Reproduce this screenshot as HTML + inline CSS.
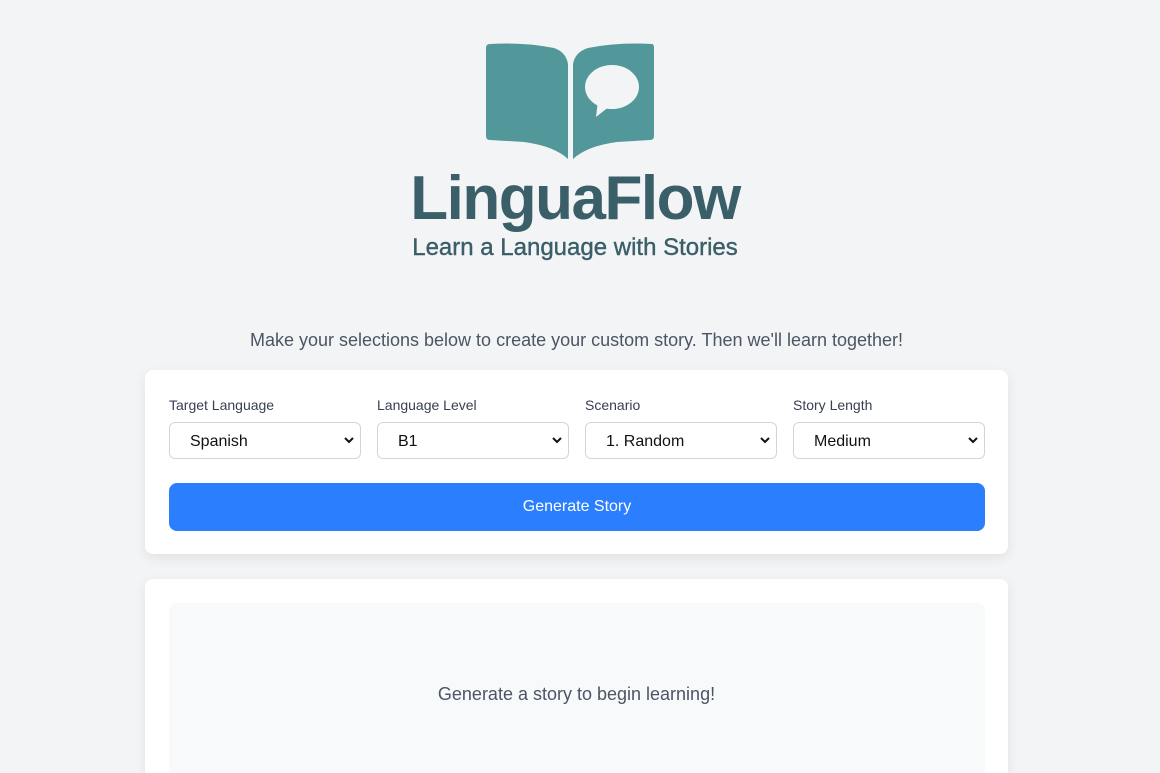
<!DOCTYPE html>
<html><head><style>
html,body{margin:0;height:773px;overflow:hidden}
body{background:#f3f4f6;font-family:"Liberation Sans",sans-serif;width:1160px;position:relative}
.abs{position:absolute}
.card{position:absolute;left:145px;width:863px;background:#fff;border-radius:8px;box-shadow:0 4px 12px rgba(0,0,0,.08)}
.lbl{position:absolute;top:27px;font-size:14px;color:#374151}
.sel{position:absolute;top:52px;width:190px;height:35px;border:1px solid #d1d5db;border-radius:6px;font-size:16px;color:#111;box-sizing:content-box}
.sel span{position:absolute;left:20px;top:10px}
.sel svg{position:absolute;right:6px;top:14px}
</style></head><body>
<svg class="abs" style="left:484px;top:42px" width="174" height="120" viewBox="0 0 174 120">
<path d="M6 2 Q40 0 70 6 Q82 10 84 22 L84 117 Q70 104 40 100 L6 98 Q2 98 2 94 L2 6 Q2 2 6 2Z" fill="#52979a"/>
<path d="M168 2 Q134 0 104 6 Q91 10 89 22 L89 117 Q103 104 133 100 L166 98 Q170 98 170 94 L170 6 Q170 2 168 2Z" fill="#52979a"/>
<ellipse cx="128" cy="45" rx="27" ry="22" fill="#f3f4f6"/>
<path d="M114 58 L112 75 L126 64Z" fill="#f3f4f6"/>
</svg>
<div class="abs" style="left:0;width:1150px;top:163px;text-align:center;font-size:62px;font-weight:bold;color:#3b5f69;letter-spacing:-1.5px">LinguaFlow</div>
<div class="abs" style="left:0;width:1150px;top:234px;text-align:center;font-size:24px;color:#3b5f69;-webkit-text-stroke:0.4px #3b5f69">Learn a Language with Stories</div>
<div class="abs" style="left:0;width:1153px;top:330px;text-align:center;font-size:18px;color:#4b5563">Make your selections below to create your custom story. Then we'll learn together!</div>
<div class="card" style="top:370px;height:184px">
<div class="lbl" style="left:24px">Target Language</div>
<div class="lbl" style="left:232px">Language Level</div>
<div class="lbl" style="left:440px">Scenario</div>
<div class="lbl" style="left:648px">Story Length</div>
<div class="sel" style="left:24px"><span>Spanish</span><svg width="10" height="7"><path d="M1 1L5 5L9 1" stroke="#111" stroke-width="2" fill="none"/></svg></div>
<div class="sel" style="left:232px"><span>B1</span><svg width="10" height="7"><path d="M1 1L5 5L9 1" stroke="#111" stroke-width="2" fill="none"/></svg></div>
<div class="sel" style="left:440px"><span>1. Random</span><svg width="10" height="7"><path d="M1 1L5 5L9 1" stroke="#111" stroke-width="2" fill="none"/></svg></div>
<div class="sel" style="left:648px"><span>Medium</span><svg width="10" height="7"><path d="M1 1L5 5L9 1" stroke="#111" stroke-width="2" fill="none"/></svg></div>
<div class="abs" style="left:24px;top:113px;width:816px;height:48px;background:#2b7fff;border-radius:8px;color:#fff;font-size:16px;text-align:center;line-height:48px">Generate Story</div>
</div>
<div class="card" style="top:579px;height:194px;border-radius:8px 8px 0 0">
<div class="abs" style="left:24px;top:24px;width:816px;height:170px;background:#f8f9fb;border-radius:8px 8px 0 0"></div>
<div class="abs" style="left:0;width:863px;top:105px;text-align:center;font-size:18px;color:#4b5563">Generate a story to begin learning!</div>
</div>
</body></html>
